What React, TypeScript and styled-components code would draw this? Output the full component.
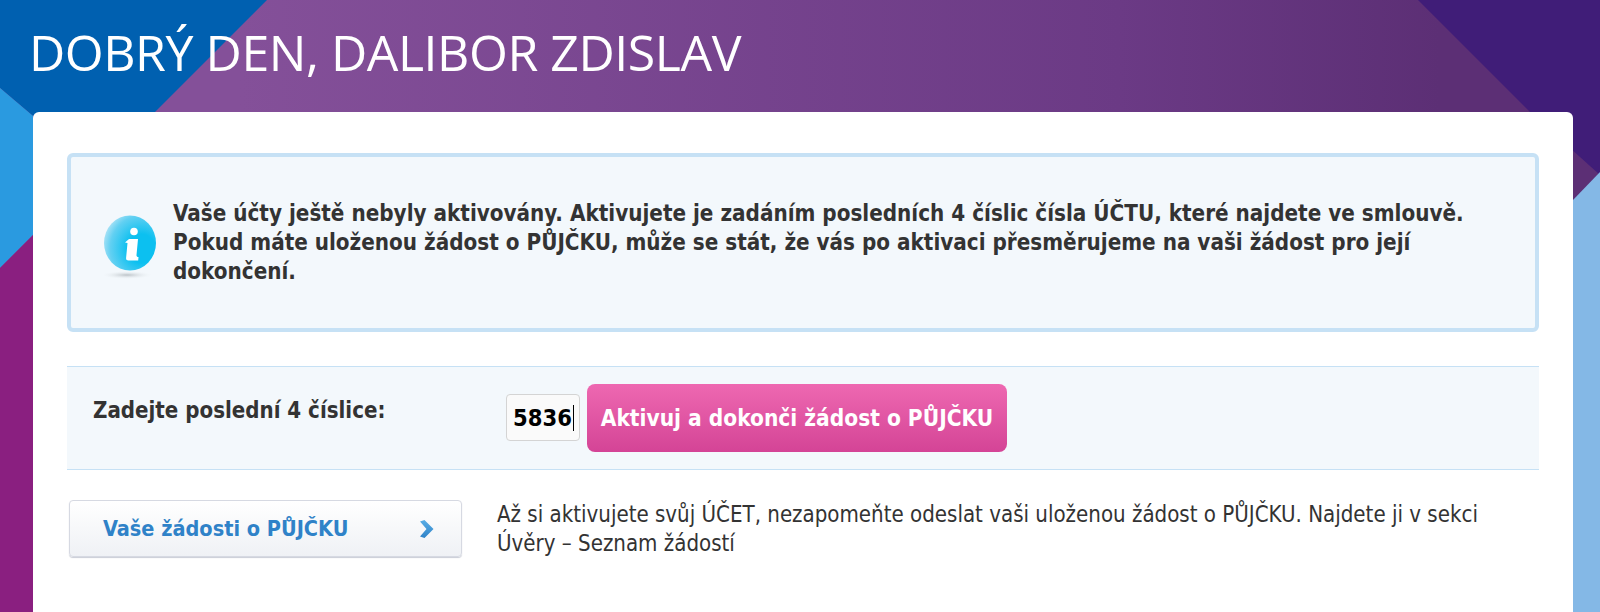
import styled, { createGlobalStyle } from 'styled-components'

const GlobalStyle = createGlobalStyle`
   html, body {
      margin: 0;
      padding: 0;
   }

   body {
      width: 1600px;
      height: 612px;
      overflow: hidden;
      font-family: "DejaVu Sans", Verdana, sans-serif;
      font-stretch: condensed;
      color: #333;
   }
`

const Page = styled.div`
   position: relative;
   width: 1600px;
   height: 612px;
   overflow: hidden;
   background: linear-gradient(90deg, #845099 15%, #6b3a85 70%, #5c2f75 90%);
`

// coloured corners of the site background, they sit behind the header and card
const Shard = styled.div<{ $color: string; $clip: string }>`
   position: absolute;
   inset: 0;
   background: ${(p) => p.$color};
   clip-path: polygon(${(p) => p.$clip});
`

const Content = styled.div`
   position: relative;
   display: flex;
   flex-direction: column;
   height: 100%;
`

const Header = styled.header`
   height: 112px;
   flex: none;
   padding: 19px 0 0 29px;
   box-sizing: border-box;
`

const Title = styled.h1`
   margin: 0;
   font-family: "Open Sans", sans-serif;
   font-stretch: normal;
   font-weight: 400;
   font-size: 50px;
   letter-spacing: -0.45px;
   line-height: 66px;
   color: #fff;
`

const Card = styled.main`
   flex: 1;
   margin: 0 27px 0 33px;
   padding: 41px 34px 0;
   background: #fff;
   border-radius: 6px 6px 0 0;
`

const Notice = styled.section`
   display: flex;
   align-items: center;
   gap: 14px;
   height: 179px;
   box-sizing: border-box;
   padding: 0 30px;
   background: #f3f8fc;
   border: 4px solid #c6e1f5;
   border-radius: 6px;
`

const NoticeText = styled.p`
   margin: 0;
   font-size: 22.25px;
   font-weight: 700;
   line-height: 29px;
`

const InputRow = styled.div`
   display: flex;
   margin-top: 34px;
   height: 104px;
   box-sizing: border-box;
   padding: 17px 0 0 26px;
   background: #f3f8fc;
   border-top: 1px solid #c6e1f5;
   border-bottom: 1px solid #c6e1f5;
`

const FieldLabel = styled.label`
   width: 413px;
   padding-top: 12px;
   font-size: 22.1px;
   font-weight: 700;
   line-height: 28px;
`

const DigitsBox = styled.div`
   display: flex;
   align-items: center;
   width: 74px;
   height: 47px;
   margin-top: 10px;
   box-sizing: border-box;
   padding: 1px 0 0 6px;
   background: #fafafa;
   border: 1px solid #d4d4d4;
   border-radius: 4px;
   font-size: 23.5px;
   font-weight: 700;
   color: #000;
`

const Caret = styled.span`
   width: 1px;
   height: 26px;
   margin-left: 1px;
   background: #000;
`

const PinkButton = styled.button`
   width: 420px;
   height: 68px;
   margin-left: 7px;
   padding: 0;
   border: 0;
   border-radius: 8px;
   background: linear-gradient(180deg, #ee68b1, #d44496);
   font-family: inherit;
   font-stretch: condensed;
   font-size: 22.5px;
   font-weight: 700;
   color: #fff;
`

const BottomRow = styled.div`
   display: flex;
   align-items: flex-start;
   margin-top: 30px;
   padding-left: 2px;
`

const LoansLink = styled.a`
   display: flex;
   align-items: center;
   justify-content: space-between;
   flex: none;
   width: 393px;
   height: 57px;
   box-sizing: border-box;
   padding: 0 27px 0 33px;
   background: linear-gradient(180deg, #fff, #eff1f5);
   border: 1px solid #d6d9e2;
   border-radius: 4px;
   box-shadow: 0 1px 1px #c9ccd6;
   font-size: 21.5px;
   font-weight: 700;
   color: #2f82c8;
`

const Hint = styled.p`
   margin: 0 0 0 35px;
   font-size: 22.1px;
   line-height: 29px;
`

const InfoIcon = () => (
   <svg width="58" height="74" viewBox="0 0 58 74" style={{ flex: 'none' }}>
      <defs>
         <radialGradient id="ball" cx="0.72" cy="0.6" r="0.75">
            <stop offset="0.35" stopColor="#0cc0f0" />
            <stop offset="0.8" stopColor="#62d0f2" />
            <stop offset="1" stopColor="#a8e2f6" />
         </radialGradient>
         <radialGradient id="drop">
            <stop offset="0" stopColor="#bcc3c8" />
            <stop offset="1" stopColor="#eef3f6" stopOpacity="0" />
         </radialGradient>
      </defs>
      <ellipse cx="26" cy="69" rx="25" ry="4" fill="url(#drop)" />
      <ellipse cx="29" cy="37" rx="26" ry="27.5" fill="url(#ball)" />
      <circle cx="33" cy="25.5" r="3.8" fill="#fff" />
      <path d="M28 33h9l-1.5 16c-.1 1.5.6 2 2 2l-.3 3.5h-9.7c-1.8 0-2.600-1-2.400-2.700l1.400-14.800-2.500-.4z" fill="#fff" />
   </svg>
)

const Chevron = () => (
   <svg width="15" height="18" viewBox="0 0 15 18">
      <defs>
         <linearGradient id="chev" x1="0" y1="0" x2="0" y2="1">
            <stop offset="0" stopColor="#5aaee6" />
            <stop offset="1" stopColor="#2f82c8" />
         </linearGradient>
      </defs>
      <path d="M1 1.5 5.5 0 14.5 9 5.5 18 1 16.5 7.5 9z" fill="url(#chev)" />
   </svg>
)

const App = () => (
   <Page>
      <GlobalStyle />
      <Shard $color="#0060b0" $clip="0 0, 267px 0, 155px 112px, 33px 116px, 0 88px" />
      <Shard $color="#2a9ae0" $clip="0 88px, 33px 116px, 33px 235px, 0 268px" />
      <Shard $color="#8a1f80" $clip="0 268px, 33px 235px, 33px 612px, 0 612px" />
      <Shard $color="#401d78" $clip="1418px 0, 1600px 0, 1600px 175px, 1530px 112px" />
      <Shard $color="#84b8e6" $clip="1573px 200px, 1600px 172px, 1600px 612px, 1573px 612px" />
      <Content>
         <Header>
            <Title>DOBRÝ DEN, DALIBOR ZDISLAV</Title>
         </Header>
         <Card>
            <Notice>
               <InfoIcon />
               <NoticeText>
                  Vaše účty ještě nebyly aktivovány. Aktivujete je zadáním posledních 4 číslic čísla ÚČTU, které najdete ve smlouvě.
                  <br />
                  Pokud máte uloženou žádost o PŮJČKU, může se stát, že vás po aktivaci přesměrujeme na vaši žádost pro její
                  <br />
                  dokončení.
               </NoticeText>
            </Notice>
            <InputRow>
               <FieldLabel>Zadejte poslední 4 číslice:</FieldLabel>
               <DigitsBox>
                  5836
                  <Caret />
               </DigitsBox>
               <PinkButton>Aktivuj a dokonči žádost o PŮJČKU</PinkButton>
            </InputRow>
            <BottomRow>
               <LoansLink>
                  Vaše žádosti o PŮJČKU
                  <Chevron />
               </LoansLink>
               <Hint>
                  Až si aktivujete svůj ÚČET, nezapomeňte odeslat vaši uloženou žádost o PŮJČKU. Najdete ji v sekci
                  <br />
                  Úvěry – Seznam žádostí
               </Hint>
            </BottomRow>
         </Card>
      </Content>
   </Page>
)

export default App
